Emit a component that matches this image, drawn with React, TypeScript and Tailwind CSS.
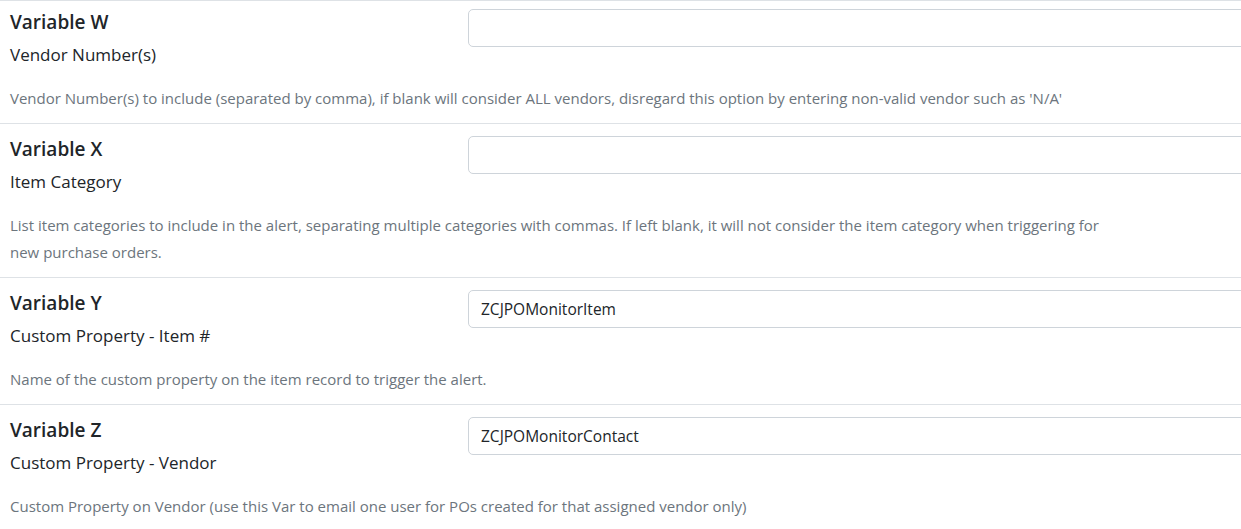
import React from 'react'

interface VariableRow {
  name: string
  label: string
  value: string
  help: string
}

const rows: VariableRow[] = [
  {
    name: 'Variable W',
    label: 'Vendor Number(s)',
    value: '',
    help: "Vendor Number(s) to include (separated by comma), if blank will consider ALL vendors, disregard this option by entering non-valid vendor such as 'N/A'",
  },
  {
    name: 'Variable X',
    label: 'Item Category',
    value: '',
    help: 'List item categories to include in the alert, separating multiple categories with commas. If left blank, it will not consider the item category when triggering for new purchase orders.',
  },
  {
    name: 'Variable Y',
    label: 'Custom Property - Item #',
    value: 'ZCJPOMonitorItem',
    help: 'Name of the custom property on the item record to trigger the alert.',
  },
  {
    name: 'Variable Z',
    label: 'Custom Property - Vendor',
    value: 'ZCJPOMonitorContact',
    help: 'Custom Property on Vendor (use this Var to email one user for POs created for that assigned vendor only)',
  },
]

export default function App() {
  return (
    <div
      className="w-full h-[529px] overflow-hidden bg-white text-[#212529]"
      style={{ fontFamily: '"Open Sans", "Noto Sans", sans-serif' }}
    >
      <div className="w-[1300px]">
        {rows.map((row, i) => (
          <VariableField key={row.name} row={row} first={i === 0} />
        ))}
      </div>
    </div>
  )
}

function VariableField({ row, first }: { row: VariableRow; first: boolean }) {
  return (
    <div className="border-t border-[#dee2e6] px-[10px] pb-[11px]">
      <div className="grid grid-cols-[458px_1fr]">
        <div className={first ? 'pt-[9px]' : 'pt-[13px]'}>
          <div className="text-[19px] leading-[24px] font-semibold">{row.name}</div>
          <div className="mt-[9px] text-[17px] leading-[24px]">{row.label}</div>
        </div>
        <div className={first ? 'pt-[8px]' : 'pt-[12px]'}>
          <input
            type="text"
            defaultValue={row.value}
            className="block h-[38px] w-full rounded-[5px] border border-[#ced4da] bg-white px-[12px] text-[15.5px] text-[#212529] outline-none"
          />
        </div>
      </div>
      <p className="mt-[18px] max-w-[1104px] text-[15px] leading-[27px] text-[#6c757d]">{row.help}</p>
    </div>
  )
}
